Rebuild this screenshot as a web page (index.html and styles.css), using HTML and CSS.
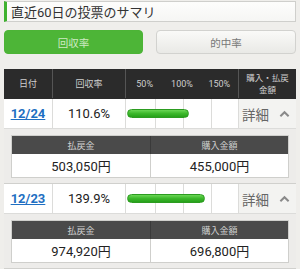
FILE: index.html
```html
<!DOCTYPE html>
<html lang="ja">
<head>
    <meta charset="UTF-8">
    <meta name="viewport" content="width=device-width, initial-scale=1.0">
    <title>投票のサマリ</title>
    <link rel="stylesheet" href="styles.css">
</head>
<body>
    <h2 class="title">直近60日の投票のサマリ</h2>

    <div class="tabs">
        <button class="tab active">回収率</button>
        <button class="tab">的中率</button>
    </div>

    <div class="summary">
        <div class="row head">
            <div class="cell">日付</div>
            <div class="cell">回収率</div>
            <div class="cell scale">
                <span>50%</span>
                <span>100%</span>
                <span>150%</span>
            </div>
            <div class="cell small">購入・払戻<br>金額</div>
        </div>

        <div class="row">
            <div class="cell"><a class="date" href="#">12/24</a></div>
            <div class="cell rate">110.6%</div>
            <div class="cell graph"><div class="bar" style="width: 62px"></div></div>
            <div class="cell detail">
                <span>詳細</span>
                <svg viewBox="0 0 12 8"><path d="M1.5 6.5L6 2l4.5 4.5"/></svg>
            </div>
        </div>
        <div class="panel">
            <div class="money">
                <div class="label">払戻金</div>
                <div class="label">購入金額</div>
                <div class="value">503,050円</div>
                <div class="value">455,000円</div>
            </div>
        </div>

        <div class="row">
            <div class="cell"><a class="date" href="#">12/23</a></div>
            <div class="cell rate">139.9%</div>
            <div class="cell graph"><div class="bar" style="width: 78px"></div></div>
            <div class="cell detail">
                <span>詳細</span>
                <svg viewBox="0 0 12 8"><path d="M1.5 6.5L6 2l4.5 4.5"/></svg>
            </div>
        </div>
        <div class="panel">
            <div class="money">
                <div class="label">払戻金</div>
                <div class="label">購入金額</div>
                <div class="value">974,920円</div>
                <div class="value">696,800円</div>
            </div>
        </div>
    </div>
</body>
</html>
```

FILE: styles.css
```css
* {
    margin: 0;
    padding: 0;
    box-sizing: border-box;
}

body {
    font-family: Roboto, "Noto Sans CJK JP", sans-serif;
    background: #efeeeb;
    padding: 1px 4px 0;
    color: #222;
}

.title {
    height: 21px;
    display: flex;
    align-items: center;
    padding-left: 4px;
    font-size: 13px;
    font-weight: normal;
    color: #333;
    background: linear-gradient(180deg, #fdfdfc 0%, #f6f6f4 100%);
    border: 1px solid #cfcfcc;
    border-left: 3px solid #3fb12f;
}

.tabs {
    display: grid;
    grid-template-columns: 139px 140px;
    gap: 13px;
    margin-top: 8px;
}

.tab {
    height: 24px;
    font-family: inherit;
    font-size: 10.5px;
    color: #777;
    border: 1px solid #d2d2cf;
    border-radius: 4px;
    background: linear-gradient(180deg, #fafaf8 0%, #e9e9e6 100%);
}

.tab.active {
    color: #cdeac2;
    border-color: #4cb436;
    background: #4db537;
}

.summary {
    margin-top: 15px;
}

.row {
    display: grid;
    grid-template-columns: 48px 73px 113px 58px;
    height: 30px;
    background: #fff;
    border-bottom: 1px solid #dcdcda;
}

.row .cell {
    display: flex;
    align-items: center;
    justify-content: center;
    border-left: 1px solid #dcdcda;
}

.row .cell:first-child {
    border-left: none;
}

.row.head {
    height: 30px;
    background: #2b2b2b;
    border-bottom: 1px solid #2b2b2b;
}

.row.head .cell {
    font-size: 9px;
    color: #cfcfcf;
    border-left-color: #555;
}

.row.head .cell.small {
    font-size: 8.5px;
    line-height: 12px;
    text-align: center;
}

.row.head .scale {
    display: grid;
    grid-template-columns: 1fr 1fr 1fr;
    align-items: center;
    justify-items: center;
}

.date {
    font-size: 13px;
    font-weight: bold;
    color: #1f6fc2;
    text-decoration: underline;
}

.rate {
    font-size: 13px;
    color: #222;
}

.row .cell.graph {
    justify-content: flex-start;
    padding-left: 1px;
    background-image:
        linear-gradient(#dcdcda, #dcdcda),
        linear-gradient(#dcdcda, #dcdcda),
        linear-gradient(#dcdcda, #dcdcda);
    background-size: 1px 100%;
    background-repeat: no-repeat;
    background-position: 29px 0, 57px 0, 85px 0;
}

.bar {
    height: 9px;
    border-radius: 5px;
    background: linear-gradient(180deg, #6ad655 0%, #3cb82b 50%, #26a01a 100%);
    border: 1px solid #2c9c20;
}

.row .cell.detail {
    justify-content: space-between;
    padding: 0 6px 0 3px;
    background: #f3f3f1;
    font-size: 13.5px;
    color: #666;
}

.detail svg {
    width: 11px;
    height: 8px;
    fill: none;
    stroke: #8a8a8a;
    stroke-width: 2.2;
}

.panel {
    padding: 6px 7px 5px;
    background: #edecea;
    border-bottom: 1px solid #d0d0cd;
}

.money {
    display: grid;
    grid-template-columns: 1fr 1fr;
    border: 1px solid #cfcfcc;
}

.money .label {
    height: 18px;
    display: flex;
    align-items: center;
    justify-content: center;
    font-size: 9px;
    color: #d0d0d0;
    background: #4a4a4a;
}

.money .label + .label {
    border-left: 1px solid #3a3a3a;
}

.money .value {
    height: 23px;
    display: flex;
    align-items: center;
    justify-content: center;
    font-size: 13px;
    color: #222;
    background: #fff;
}

.money .value + .value {
    border-left: 1px solid #cfcfcc;
}
```
